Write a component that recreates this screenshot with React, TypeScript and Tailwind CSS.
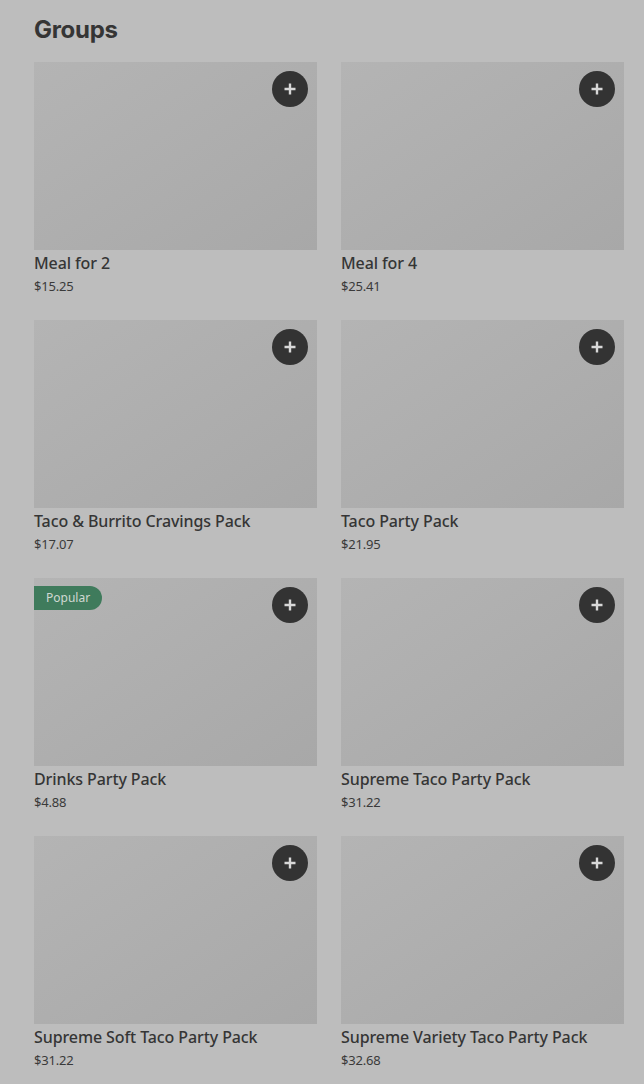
const groups = [
  { name: "Meal for 2", price: "$15.25" },
  { name: "Meal for 4", price: "$25.41" },
  { name: "Taco & Burrito Cravings Pack", price: "$17.07" },
  { name: "Taco Party Pack", price: "$21.95" },
  { name: "Drinks Party Pack", price: "$4.88", popular: true },
  { name: "Supreme Taco Party Pack", price: "$31.22" },
  { name: "Supreme Soft Taco Party Pack", price: "$31.22" },
  { name: "Supreme Variety Taco Party Pack", price: "$32.68" },
];

const PlusButton = () => (
  <button className="absolute top-[9px] right-[9px] w-9 h-9 rounded-full bg-[#333333] flex items-center justify-center">
    <svg width="12" height="12" viewBox="0 0 12 12" fill="none" stroke="#d8d8d8" strokeWidth="2.4">
      <path d="M6 0.5v11M0.5 6h11" />
    </svg>
  </button>
);

export default function App() {
  return (
    <div className="min-h-[1084px] bg-[#bdbdbd] px-[34px] pt-3.5 pb-6 font-['Noto_Sans',sans-serif] text-[#353535]">
      <h2 className="text-2xl leading-8 font-bold font-['Inter',sans-serif] tracking-[-0.3px] mb-4">
        Groups
      </h2>
      <div className="grid grid-cols-2 gap-x-6 gap-y-[25px] w-[590px]">
        {groups.map((g) => (
          <div key={g.name} className="flex flex-col">
            <div className="relative h-[188px] bg-gradient-to-br from-[#b4b4b4] to-[#a8a8a8]">
              {g.popular && (
                <span className="absolute top-2 left-0 h-6 pl-3 pr-3 flex items-center rounded-r-full bg-[#3f7b5c] text-[12px] text-[#d0d8d2]">
                  Popular
                </span>
              )}
              <PlusButton />
            </div>
            <div className="mt-[3px] text-base leading-5 font-medium tracking-[-0.1px]">{g.name}</div>
            <div className="mt-1 text-[13px] leading-[18px] text-[#3a3a3a] tracking-[-0.2px]">{g.price}</div>
          </div>
        ))}
      </div>
    </div>
  );
}
